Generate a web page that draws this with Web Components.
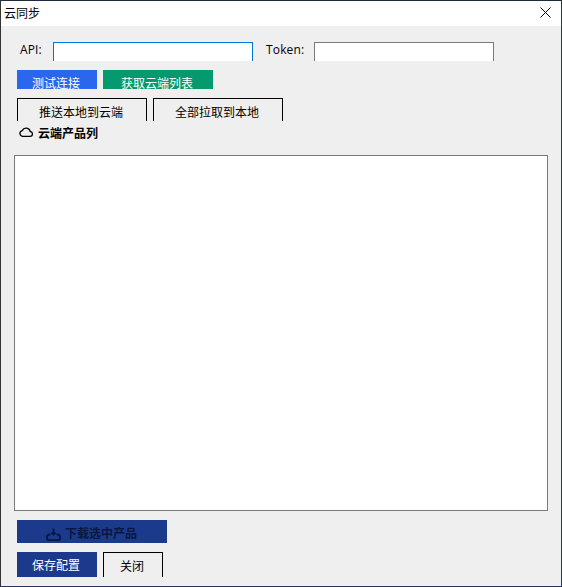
<!DOCTYPE html>
<html lang="zh">
<head>
<meta charset="utf-8">
<title>云同步</title>
<style>
    html, body { margin: 0; height: 100%; background: #efefef; }
    body { font: 12px "Noto Sans CJK SC", "Noto Sans", sans-serif; color: #000; }
</style>
</head>
<body>
<sync-dialog heading="云同步">
    <btn-row slot="body" pad="16" gap="0" top="16" height="19">
        <text-field label="API:" label-width="36" width="200" focused></text-field>
        <text-field label="Token:" label-width="61" label-gap="13" width="180"></text-field>
    </btn-row>
    <btn-row slot="body" top="9" height="19">
        <flat-button width="80" bg="#2b66ef" color="#fff" pt="7">测试连接</flat-button>
        <flat-button width="110" bg="#059a6e" color="#fff" pt="7">获取云端列表</flat-button>
    </btn-row>
    <btn-row slot="body" top="9" height="23">
        <flat-button width="130" outline pt="3">推送本地到云端</flat-button>
        <flat-button width="130" outline pt="3">全部拉取到本地</flat-button>
    </btn-row>
    <section-label slot="body">云端产品列</section-label>
    <list-box slot="body"></list-box>
    <btn-row slot="body" top="9" height="23">
        <flat-button width="150" bg="#1c3a8c" color="#0a1745" pt="3" bold icon>下载选中产品</flat-button>
    </btn-row>
    <btn-row slot="body" top="9" height="25">
        <flat-button width="80" bg="#1c3a8c" color="#fff" pt="1">保存配置</flat-button>
        <flat-button width="60" outline pt="1">关闭</flat-button>
    </btn-row>
</sync-dialog>

<script>
class SyncDialog extends HTMLElement {
    constructor() {
        super();
        const shadow = this.attachShadow({mode: 'open'});
        const heading = this.getAttribute('heading') || '';

        shadow.innerHTML = `
            <style>
                :host {
                    background: #efefef;
                    border-color: #1f2a3d #2a3560 #2a3560 #333;
                    border-style: solid;
                    border-width: 1px;
                    box-sizing: border-box;
                    display: flex;
                    flex-direction: column;
                    height: 587px;
                    width: 562px;
                }
                header {
                    align-items: center;
                    background: #fff;
                    box-sizing: border-box;
                    display: flex;
                    flex: none;
                    height: 25px;
                    justify-content: space-between;
                    padding: 0 10px 2px 3px;
                }
                h1 {
                    font-size: 12px;
                    font-weight: 400;
                    margin: 0;
                }
                svg {
                    fill: none;
                    height: 11px;
                    stroke: #000;
                    stroke-width: 1;
                    width: 11px;
                }
                main {
                    display: flex;
                    flex: 1;
                    flex-direction: column;
                }
            </style>
            <header>
                <h1>${heading}</h1>
                <svg viewBox="0 0 11 11">
                    <path d="M0.5 0.5L10.5 10.5"></path>
                    <path d="M10.5 0.5L0.5 10.5"></path>
                </svg>
            </header>
            <main><slot name="body"></slot></main>
        `;
    }
}

class BtnRow extends HTMLElement {
    constructor() {
        super();
        const shadow = this.attachShadow({mode: 'open'});
        const top = this.getAttribute('top') || 0;
        const height = this.getAttribute('height') || 20;
        const pad = this.getAttribute('pad') || 16;
        const gap = this.getAttribute('gap') || 6;

        shadow.innerHTML = `
            <style>
                :host {
                    display: flex;
                    flex: none;
                    gap: ${gap}px;
                    height: ${height}px;
                    margin-top: ${top}px;
                    padding-left: ${pad}px;
                }
            </style>
            <slot></slot>
        `;
    }
}

class TextField extends HTMLElement {
    constructor() {
        super();
        const shadow = this.attachShadow({mode: 'open'});
        const label = this.getAttribute('label') || '';
        const labelWidth = this.getAttribute('label-width') || 36;
        const labelGap = this.getAttribute('label-gap') || 3;
        const width = this.getAttribute('width') || 180;
        const line = this.hasAttribute('focused') ? '#0078d7' : '#7a7a7a';

        shadow.innerHTML = `
            <style>
                :host { display: flex; }
                label {
                    box-sizing: border-box;
                    font-family: "Open Sans", "Noto Sans", sans-serif;
                    font-size: 12px;
                    letter-spacing: 0.15px;
                    line-height: 15px;
                    padding-left: ${labelGap}px;
                    width: ${labelWidth}px;
                }
                div {
                    background: #fff;
                    border: 1px solid ${line};
                    border-bottom: 0;
                    box-sizing: border-box;
                    height: 19px;
                    width: ${width}px;
                }
            </style>
            <label>${label}</label>
            <div></div>
        `;
    }
}

class FlatButton extends HTMLElement {
    constructor() {
        super();
        const shadow = this.attachShadow({mode: 'open'});
        const width = this.getAttribute('width') || 80;
        const bg = this.getAttribute('bg') || 'transparent';
        const color = this.getAttribute('color') || '#000';
        const outline = this.hasAttribute('outline');
        const pt = this.getAttribute('pt') || 0;
        const weight = this.hasAttribute('bold') ? 700 : 400;
        const hasIcon = this.hasAttribute('icon');
        // tray with a down arrow, drawn heavy like the reference glyph
        const icon = hasIcon ? `
            <svg viewBox="0 0 15 13">
                <path d="M7.5 0.5v5.500"></path>
                <path d="M5 5h5l-2.500 2.500z" fill="currentColor" stroke-width="1"></path>
                <path d="M4.500 6.500H3.500C2 6.500 1 7.500 1 9v1.500C1 11.700 1.800 12.200 3 12.200h9c1.200 0 2-.5 2-1.700V9c0-1.500-1-2.500-2.500-2.500h-1"></path>
            </svg>` : '';

        shadow.innerHTML = `
            <style>
                :host {
                    display: block;
                    flex: none;
                    width: ${width}px;
                }
                button {
                    align-items: center;
                    background: ${bg};
                    border: ${outline ? '1px solid #000' : '0'};
                    border-bottom: 0;
                    box-sizing: border-box;
                    color: ${color};
                    display: flex;
                    font: inherit;
                    font-weight: ${weight};
                    gap: 4px;
                    height: 100%;
                    justify-content: center;
                    line-height: 14px;
                    overflow: hidden;
                    padding: ${pt}px ${hasIcon ? 0 : 2}px 0 0;
                    width: 100%;
                }
                svg {
                    fill: none;
                    flex: none;
                    height: 13px;
                    margin-left: -1px;
                    margin-top: 2px;
                    stroke: ${color};
                    stroke-width: 1.9;
                    width: 15px;
                }
            </style>
            <button type="button">${icon}<slot></slot></button>
        `;
    }
}

class SectionLabel extends HTMLElement {
    constructor() {
        super();
        const shadow = this.attachShadow({mode: 'open'});

        shadow.innerHTML = `
            <style>
                :host {
                    align-items: center;
                    box-sizing: border-box;
                    display: flex;
                    flex: none;
                    font-weight: 700;
                    gap: 5px;
                    height: 24px;
                    padding: 0 0 2px 18px;
                }
                svg {
                    fill: none;
                    height: 10px;
                    stroke: #000;
                    stroke-width: 1.3;
                    width: 14px;
                }
            </style>
            <svg viewBox="0 0 14 10">
                <path d="M3.5 9.300h7.500a2.300 2.300 0 0 0 .3-4.600A4.300 4.300 0 0 0 3.200 3.600 2.900 2.900 0 0 0 3.500 9.300z"></path>
            </svg>
            <slot></slot>
        `;
    }
}

class ListBox extends HTMLElement {
    constructor() {
        super();
        const shadow = this.attachShadow({mode: 'open'});

        shadow.innerHTML = `
            <style>
                :host {
                    background: #fff;
                    border: 1px solid #7a7a7a;
                    box-sizing: border-box;
                    display: block;
                    flex: none;
                    height: 356px;
                    margin: 10px 0 0 13px;
                    width: 534px;
                }
            </style>
        `;
    }
}

customElements.define('sync-dialog', SyncDialog);
customElements.define('btn-row', BtnRow);
customElements.define('text-field', TextField);
customElements.define('flat-button', FlatButton);
customElements.define('section-label', SectionLabel);
customElements.define('list-box', ListBox);
</script>
</body>
</html>
